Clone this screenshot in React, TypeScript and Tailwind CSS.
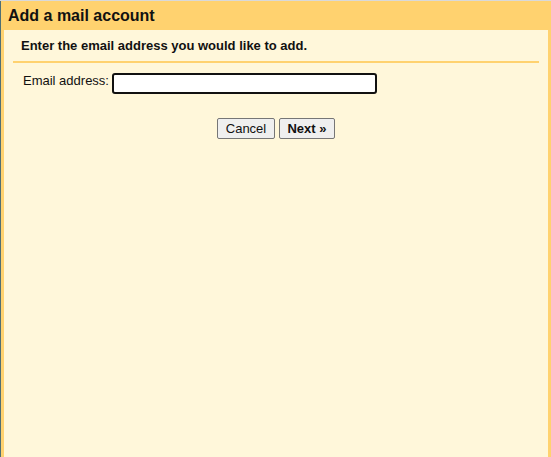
export default function App() {
  return (
    <div
      className="w-[551px] h-[457px] overflow-hidden bg-[#d9d9d9] pt-px flex"
      style={{ fontFamily: '"Liberation Sans", Arial, sans-serif' }}
    >
      <div className="w-px bg-[#4f6f74]" />
      <div className="flex-1 flex flex-col bg-[#ffd26f] px-[3px]">
        <div className="h-[29px] flex items-center pl-[4px] pt-[1px]">
          <h1 className="text-[16px] font-bold text-[#111] leading-none">Add a mail account</h1>
        </div>
        <div className="flex-1 bg-[#fff7da] px-[9px] pt-[8px]">
          <div className="border-b-2 border-[#ffd26f] pb-[7px] pl-[8px]">
            <p className="text-[13px] font-bold text-[#111] leading-[16px]">
              Enter the email address you would like to add.
            </p>
          </div>
          <div className="flex items-start pt-[9px] pl-[10px]">
            <label className="text-[13px] text-[#111] leading-[16px] pt-[1px]">Email address:</label>
            <input
              type="text"
              className="ml-[3px] mt-[1px] w-[265px] h-[21px] bg-white border-2 border-[#111] rounded-[3px] outline-none"
            />
          </div>
          <div className="flex justify-center gap-[4px] pt-[24px]">
            <button className="w-[58px] h-[21px] bg-[#efefef] border border-[#767676] rounded-[2px] text-[13px] text-[#111] leading-none">
              Cancel
            </button>
            <button className="w-[56px] h-[21px] bg-[#efefef] border border-[#767676] rounded-[2px] text-[13px] font-bold text-[#111] leading-none">
              Next »
            </button>
          </div>
        </div>
      </div>
    </div>
  );
}
